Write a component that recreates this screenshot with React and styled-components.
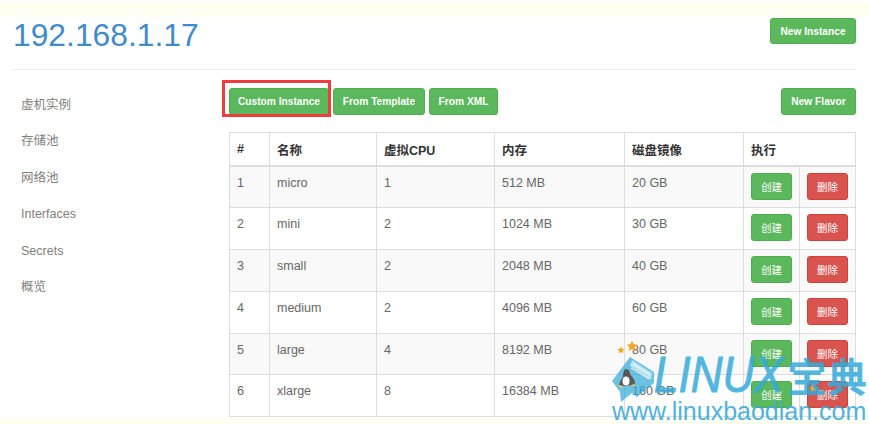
import React from "react";
import styled, { createGlobalStyle } from "styled-components";

const Global = createGlobalStyle`
  html, body { margin: 0; padding: 0; background: #fff; }
  body { width: 869px; height: 424px; overflow: hidden; font-family: "Liberation Sans", "Noto Sans CJK SC", Arial, sans-serif; font-size: 12.5px; color: #666; }
`;
const Page = styled.div`
  position: relative;
  width: 869px;
  height: 424px;
  overflow: hidden;
  display: flex;
  flex-direction: column;
  background: #fff;
`;
const TopStrip = styled.div`
  height: 15px;
  margin-top: 2px;
  background: #fffff2;
  flex: none;
`;
const Header = styled.header`
  height: 52px;
  margin: 0 13px 0 12px;
  border-bottom: 1px solid #eee;
  display: flex;
  justify-content: space-between;
  align-items: flex-start;
  flex: none;
`;
const Title = styled.h1`
  margin: 0 0 0 1px;
  font-weight: 400;
  font-size: 31.8px;
  line-height: 36px;
  color: #428bca;
`;
const Button = styled.button`
  height: ${(p) => p.$h || 27}px;
  margin-top: ${(p) => p.$top || 0}px;
  padding: 0;
  width: ${(p) => p.$w}px;
  border: 1px solid ${(p) => (p.$danger ? "#d43f3a" : "#4cae4c")};
  border-radius: 3px;
  background: ${(p) => (p.$danger ? "#d9534f" : "#5cb85c")};
  color: #fff;
  font-family: inherit;
  font-size: ${(p) => (p.$small ? 10.5 : 10.2)}px;
  font-weight: ${(p) => (p.$small ? 400 : 700)};
  flex: none;
  display: block;
`;
const Body = styled.div`
  display: flex;
  flex: 1;
  min-height: 0;
`;
const Side = styled.nav`
  width: 229px;
  flex: none;
  padding: 26px 0 0 21px;
  box-sizing: border-box;
  display: flex;
  flex-direction: column;
`;
const SideItem = styled.div`
  height: 36.4px;
  line-height: 19px;
  font-size: 12.5px;
  color: #808080;
`;
const Main = styled.main`
  width: 627px;
  flex: none;
  padding-top: 18px;
`;
const Toolbar = styled.div`
  display: flex;
  gap: 4px;
  height: 27px;
  position: relative;
`;
const Spacer = styled.div`
  flex: 1;
`;
const RedBox = styled.div`
  position: absolute;
  left: -7px;
  top: -8px;
  width: 109px;
  height: 37px;
  box-sizing: border-box;
  border: 3px solid #f03c3c;
  pointer-events: none;
`;
const Table = styled.table`
  margin-top: 17px;
  width: 626px;
  table-layout: fixed;
  border-collapse: collapse;
  font-size: 12.5px;
`;
const Th = styled.th`
  height: 32px;
  padding: 0 0 0 7px;
  text-align: left;
  vertical-align: middle;
  border: 1px solid #ddd;
  border-bottom-width: 2px;
  color: #333;
  font-weight: 700;
  font-size: 12.5px;
`;
const Row = styled.tr`
  background: ${(p) => (p.$odd ? "#f9f9f9" : "#fff")};
`;
const Td = styled.td`
  height: 41.75px;
  padding: 8px 0 0 7px;
  box-sizing: border-box;
  vertical-align: top;
  border: 1px solid #ddd;
  line-height: 16px;
  color: #666;
`;
const ActionTd = styled(Td)`
  padding: 6px 0 0 7px;
`;
const Watermark = styled.div`
  position: absolute;
  left: 0;
  top: 0;
  width: 869px;
  height: 424px;
  pointer-events: none;
`;
const Logo = styled.svg`
  position: absolute;
  left: 606px;
  top: 350px;
  width: 56px;
  height: 56px;
  opacity: 0.72;
`;
const Brand = styled.div`
  position: absolute;
  left: 654px;
  top: 348px;
  display: flex;
  align-items: baseline;
  color: #35abd9;
  opacity: 0.85;
  white-space: nowrap;
  line-height: 54px;
`;
const BrandLatin = styled.span`
  display: inline-block;
  width: 133px;
  font-family: "Liberation Sans", sans-serif;
  font-size: 50px;
  font-style: italic;
  -webkit-text-stroke: 1px #35abd9;
  transform: scaleX(0.88);
  transform-origin: left center;
`;
const BrandHan = styled.span`
  font-family: "Noto Sans CJK SC", sans-serif;
  font-size: 40px;
  font-weight: 700;
`;
const Site = styled.div`
  position: absolute;
  left: 612px;
  top: 397px;
  font-family: "Liberation Sans", sans-serif;
  font-size: 25px;
  line-height: 28px;
  color: #3cabd8;
  opacity: 0.9;
  white-space: nowrap;
`;
const Star = styled.svg`
  position: absolute;
  left: ${(p) => p.$x}px;
  top: ${(p) => p.$y}px;
  width: ${(p) => p.$s}px;
  height: ${(p) => p.$s}px;
`;
const Bottom = styled.div`
  position: absolute;
  left: 0;
  right: 0;
  bottom: 0;
  height: 6px;
  background: #fffff2;
`;

const rows = [
  ["micro", 1, "512 MB", "20 GB"],
  ["mini", 2, "1024 MB", "30 GB"],
  ["small", 2, "2048 MB", "40 GB"],
  ["medium", 2, "4096 MB", "60 GB"],
  ["large", 4, "8192 MB", "80 GB"],
  ["xlarge", 8, "16384 MB", "160 GB"],
];
const cols = [40, 107, 118, 130, 119, 56, 56];
const StarIcon = ({ x, y, s }) => (
  <Star $x={x} $y={y} $s={s} viewBox="0 0 20 20">
    <path d="M10 1l2.7 5.9 6.3.7-4.7 4.3 1.3 6.3L10 15l-5.6 3.2 1.3-6.3L1 7.6l6.3-.7z" fill="#f5a623" />
  </Star>
);

export default function App() {
  return (
    <Page>
      <Global />
      <TopStrip />
      <Header>
        <Title>192.168.1.17</Title>
        <Button $w={86} $h={26} $top={1}>New Instance</Button>
      </Header>
      <Body>
        <Side>
          {["虚机实例", "存储池", "网络池", "Interfaces", "Secrets", "概览"].map((t) => (
            <SideItem key={t}>{t}</SideItem>
          ))}
        </Side>
        <Main>
          <Toolbar>
            <Button $w={100}>Custom Instance</Button>
            <Button $w={92}>From Template</Button>
            <Button $w={69}>From XML</Button>
            <Spacer />
            <Button $w={75}>New Flavor</Button>
            <RedBox />
          </Toolbar>
          <Table>
            <colgroup>
              {cols.map((w, i) => <col key={i} style={{ width: w }} />)}
            </colgroup>
            <thead>
              <tr>
                <Th>#</Th>
                <Th>名称</Th>
                <Th>虚拟CPU</Th>
                <Th>内存</Th>
                <Th>磁盘镜像</Th>
                <Th colSpan={2}>执行</Th>
              </tr>
            </thead>
            <tbody>
              {rows.map((r, i) => (
                <Row key={r[0]} $odd={i % 2 === 0}>
                  <Td>{i + 1}</Td>
                  <Td>{r[0]}</Td>
                  <Td>{r[1]}</Td>
                  <Td>{r[2]}</Td>
                  <Td>{r[3]}</Td>
                  <ActionTd><Button $w={41} $small>创建</Button></ActionTd>
                  <ActionTd><Button $w={41} $small $danger>删除</Button></ActionTd>
                </Row>
              ))}
            </tbody>
          </Table>
        </Main>
      </Body>
      <Bottom />
      <Watermark>
        <StarIcon x={617} y={346} s={8} />
        <StarIcon x={626} y={340} s={12} />
        <StarIcon x={808} y={383} s={10} />
        <Logo viewBox="606 350 56 56">
          <path d="M612 381L630 357L654 372L654 383L637 397L632 393L621 402L620 392Z" fill="#35abd9" />
          <path d="M632 360L652 373L651 380L630 366Z" fill="#a6dcf0" />
          <path d="M633 364L650 375M631 368L649 379" stroke="#fff" strokeWidth="1" />
          <path d="M626 369c3 0 4 3 4 5 2 3 5 5 5 9 0 2-2 2-3 2l-7 1c-2 0-5 0-6-1 0-3 3-6 4-9 0-3 1-7 3-7z" fill="#1d1d1d" />
          <ellipse cx="626" cy="381" rx="3.5" ry="4.5" fill="#fff" />
          <path d="M618 385l5 1-2 2zM631 385l4-1-1 3z" fill="#f2b632" />
        </Logo>
        <Brand>
          <BrandLatin>LINUX</BrandLatin>
          <BrandHan>宝典</BrandHan>
        </Brand>
        <Site>www.linuxbaodian.com</Site>
      </Watermark>
    </Page>
  );
}
